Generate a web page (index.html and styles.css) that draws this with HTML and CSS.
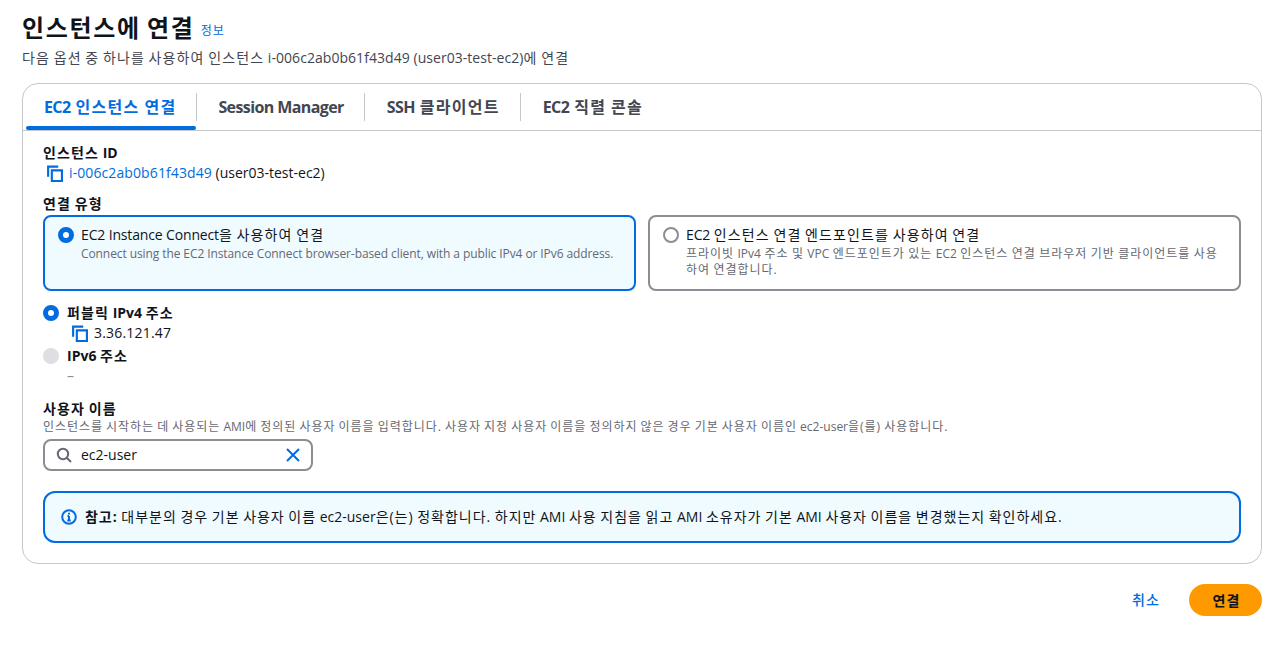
FILE: index.html
```html
<!DOCTYPE html>
<html lang="ko">
<head>
<meta charset="utf-8">
<title>인스턴스에 연결</title>
<link rel="stylesheet" href="styles.css">
</head>
<body>
<header class="head">
  <h1 class="title">인스턴스에 연결 <a class="info">정보</a></h1>
  <p class="subtitle">다음 옵션 중 하나를 사용하여 인스턴스 <span class="la">i-006c2ab0b61f43d49 (user03-test-ec2)</span>에 연결</p>
</header>
<section class="card">
  <nav class="tabs">
    <a class="tab active"><span class="la">EC2</span> 인스턴스 연결</a>
    <a class="tab"><span class="la">Session Manager</span></a>
    <a class="tab"><span class="la">SSH</span> 클라이언트</a>
    <a class="tab last"><span class="la">EC2</span> 직렬 콘솔</a>
  </nav>
  <div class="body">
    <div class="field-id">
      <div class="label">인스턴스 <span class="la">ID</span></div>
      <div class="value">
        <svg class="copy" viewBox="0 0 16 16"><path d="M2 11V1.5h9.5M5.5 5H15v10H5.5z"/></svg>
        <span class="la"><a class="link">i-006c2ab0b61f43d49</a> (user03-test-ec2)</span>
      </div>
    </div>
    <div class="label type-label">연결 유형</div>
    <div class="tiles">
      <div class="tile selected">
        <span class="radio on"></span>
        <div>
          <div class="tile-title"><span class="la">EC2 Instance Connect</span>을 사용하여 연결</div>
          <div class="tile-desc"><span class="la">Connect using the EC2 Instance Connect browser-based client, with a public IPv4 or IPv6 address.</span></div>
        </div>
      </div>
      <div class="tile">
        <span class="radio off"></span>
        <div>
          <div class="tile-title"><span class="la">EC2</span> 인스턴스 연결 엔드포인트를 사용하여 연결</div>
          <div class="tile-desc">프라이빗 <span class="la">IPv4</span> 주소 및 <span class="la">VPC</span> 엔드포인트가 있는 <span class="la">EC2</span> 인스턴스 연결 브라우저 기반 클라이언트를 사용하여 연결합니다.</div>
        </div>
      </div>
    </div>
    <div class="ip-group">
      <div class="ip-row"><span class="radio on"></span><span class="label">퍼블릭 <span class="la">IPv4</span> 주소</span></div>
      <div class="ip-value">
        <svg class="copy" viewBox="0 0 16 16"><path d="M2 11V1.5h9.5M5.5 5H15v10H5.5z"/></svg>
        <span class="la">3.36.121.47</span>
      </div>
      <div class="ip-row second"><span class="radio disabled"></span><span class="label"><span class="la">IPv6</span> 주소</span></div>
      <div class="ip-empty">–</div>
    </div>
    <div class="label user-label">사용자 이름</div>
    <div class="hint">인스턴스를 시작하는 데 사용되는 <span class="la">AMI</span>에 정의된 사용자 이름을 입력합니다. 사용자 지정 사용자 이름을 정의하지 않은 경우 기본 사용자 이름인 <span class="la">ec2-user</span>을(를) 사용합니다.</div>
    <div class="search">
      <svg class="search-icon" viewBox="0 0 16 16"><circle cx="7" cy="7" r="5.2"/><path d="M11 11l4 4"/></svg>
      <span class="search-text la">ec2-user</span>
      <svg class="clear" viewBox="0 0 16 16"><path d="M2 2l12 12M14 2L2 14"/></svg>
    </div>
    <div class="alert">
      <svg class="info-icon" viewBox="0 0 16 16"><circle cx="8" cy="8" r="6.8"/><path d="M8 7v4.5M6.3 11.5h3.4M6.5 7H8"/><path class="dot" d="M8 3.8v1.6"/></svg>
      <span class="alert-text"><b>참고:</b> 대부분의 경우 기본 사용자 이름 <span class="la">ec2-user</span>은(는) 정확합니다. 하지만 <span class="la">AMI</span> 사용 지침을 읽고 <span class="la">AMI</span> 소유자가 기본 <span class="la">AMI</span> 사용자 이름을 변경했는지 확인하세요.</span>
    </div>
  </div>
</section>
<footer class="actions">
  <a class="cancel">취소</a>
  <button class="primary">연결</button>
</footer>
</body>
</html>
```

FILE: styles.css
```css
* { box-sizing: border-box; letter-spacing: .08em; word-spacing: -.08em; }
.la { letter-spacing: 0; word-spacing: 0; }
html, body { margin: 0; padding: 0; }
body {
  padding: 11px 22px 0;
  background: #fff;
  color: #0f141a;
  font-family: "Open Sans", "Noto Sans CJK KR", sans-serif;
  font-size: 14px;
  line-height: 20px;
  height: 655px;
  overflow: hidden;
}
.head { height: 72px; }
.title { margin: 0; font-size: 24px; line-height: 34px; font-weight: 700; letter-spacing: .07em; word-spacing: -.07em; }
.info { font-size: 12px; font-weight: 400; color: #006ce0; vertical-align: 2px; }
.subtitle { margin: -1px 0 0; color: #424650; line-height: 22px; }
.subtitle .la { letter-spacing: .05px; }
.card { border: 1px solid #c6c6cd; border-radius: 16px; height: 481px; }
.tabs { display: flex; height: 47px; border-bottom: 1px solid #c6c6cd; padding: 0 0 0 3px; }
.tab {
  position: relative;
  padding: 0 20px 0 18px;
  margin-top: 9px;
  height: 28px;
  line-height: 28px;
  font-size: 16px;
  font-weight: 700;
  color: #424650;
  border-right: 1px solid #c6c6cd;
  word-spacing: -.5px;
}
.tab .la { letter-spacing: -.6px; }
.tab + .tab { padding-left: 21px; }
.tab + .tab + .tab { padding-left: 22px; }
.tab.last { border-right: 0; }
.tab.active { color: #006ce0; }
.tab.active::after {
  content: "";
  position: absolute;
  left: 0; right: 0; top: 33px;
  height: 4px;
  background: #006ce0;
  border-radius: 2px;
}
.body { padding: 12px 20px 0; }
.label { font-weight: 700; }
.value { display: flex; align-items: center; gap: 6px; padding-left: 3px; }
.copy { width: 17px; height: 17px; fill: none; stroke: #006ce0; stroke-width: 2; flex: none; }
.link { color: #006ce0; letter-spacing: .1px; word-spacing: 0; }
.type-label { margin-top: 11px; }
.tiles { display: grid; grid-template-columns: 593px 593px; gap: 12px; margin-top: 1px; }
.tile {
  display: flex;
  gap: 7px;
  height: 76px;
  padding: 8px 13px;
  border: 2px solid #8c8c94;
  border-radius: 8px;
}
.tile.selected { border-color: #006ce0; background: #f0fbff; }
.radio { flex: none; width: 16px; height: 16px; border-radius: 50%; margin-top: 2px; }
.radio.on { border: 5px solid #006ce0; background: #fff; }
.radio.off { border: 2px solid #8c8c94; background: #fff; }
.radio.disabled { background: #dedee3; }
.tile-title .la { letter-spacing: -.15px; }
.tile-desc { margin-top: 1px; font-size: 12px; line-height: 16px; color: #656871; word-spacing: -.6px; }
.selected .tile-desc .la { letter-spacing: -.09px; word-spacing: 0; }
.ip-group { margin-top: 12px; }
.ip-row { display: flex; gap: 8px; }
.ip-row.second { margin-top: 3px; }
.ip-value { display: flex; align-items: center; gap: 6px; padding-left: 28px; }
.ip-value .la { letter-spacing: .2px; }
.ip-empty { padding-left: 24px; color: #8c8c94; height: 20px; letter-spacing: 0; }
.user-label { margin-top: 13px; }
.hint { font-size: 12px; line-height: 16px; color: #656871; }
.search {
  display: flex;
  align-items: center;
  width: 270px;
  height: 32px;
  margin-top: 4px;
  padding: 0 10px 0 11px;
  border: 2px solid #8c8c94;
  border-radius: 8px;
}
.search-icon { width: 16px; height: 16px; fill: none; stroke: #656871; stroke-width: 2; flex: none; }
.search-text { margin-left: 9px; flex: 1; }
.clear { width: 16px; height: 16px; fill: none; stroke: #006ce0; stroke-width: 2; flex: none; }
.alert {
  display: flex;
  align-items: center;
  gap: 8px;
  height: 52px;
  margin-top: 20px;
  padding: 0 16px;
  border: 2px solid #006ce0;
  border-radius: 12px;
  background: #f0fbff;
}
.alert-text { letter-spacing: .07em; word-spacing: -.07em; }
.alert-text b { letter-spacing: .07em; }
.info-icon { width: 16px; height: 16px; fill: none; stroke: #006ce0; stroke-width: 2; flex: none; }
.actions { display: flex; justify-content: flex-end; align-items: center; gap: 29px; margin-top: 20px; }
.cancel { color: #006ce0; font-weight: 500; font-size: 14px; }
.primary {
  width: 73px;
  height: 32px;
  padding: 0 0 0 2px;
  border: 0;
  border-radius: 16px;
  background: #ff9900;
  color: #0f141a;
  font: 700 14px "Open Sans", "Noto Sans CJK KR", sans-serif;
}
```
